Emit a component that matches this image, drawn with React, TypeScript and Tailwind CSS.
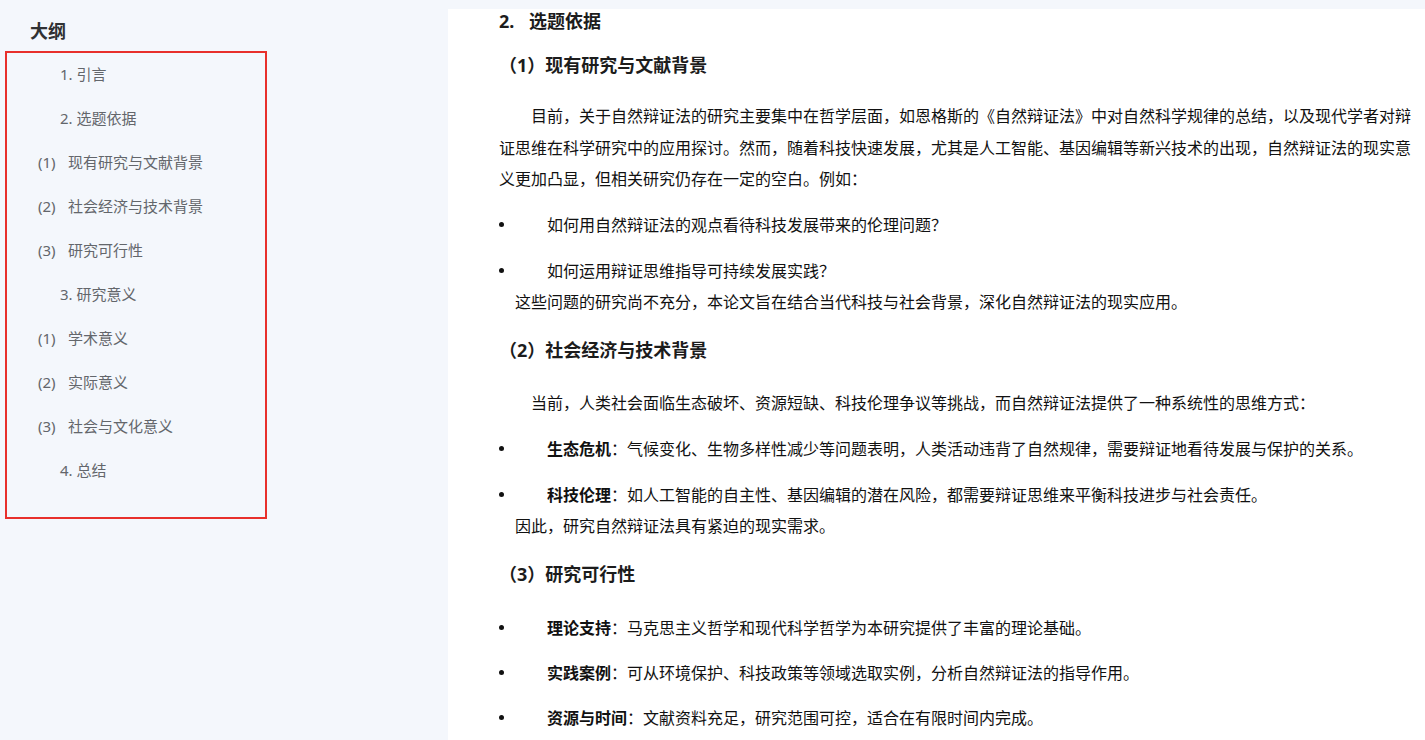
const OUTLINE: { num?: string; sub?: string; title: string }[] = [
  { num: '1.', title: '引言' },
  { num: '2.', title: '选题依据' },
  { sub: '(1)', title: '现有研究与文献背景' },
  { sub: '(2)', title: '社会经济与技术背景' },
  { sub: '(3)', title: '研究可行性' },
  { num: '3.', title: '研究意义' },
  { sub: '(1)', title: '学术意义' },
  { sub: '(2)', title: '实际意义' },
  { sub: '(3)', title: '社会与文化意义' },
  { num: '4.', title: '总结' },
];

function Bullet({
  label,
  children,
  className = '',
}: {
  label?: string;
  children: React.ReactNode;
  className?: string;
}) {
  return (
    <div className={`flex items-center leading-[32px] ${className}`}>
      <span className="flex w-[48px] shrink-0 items-center">
        <span className="h-[5px] w-[5px] rounded-full bg-[#111]" />
      </span>
      <span>
        {label ? <strong className="font-bold">{label}</strong> : null}
        {label ? '：' : null}
        {children}
      </span>
    </div>
  );
}

function SectionTitle({ children, className = '' }: { children: React.ReactNode; className?: string }) {
  return (
    <h3 className={`text-[18px] font-bold leading-[24px] text-[#1c1c1c] ${className}`}>{children}</h3>
  );
}

export default function App() {
  return (
    <div
      className="flex h-[740px] overflow-hidden bg-[#f4f7fc]"
      style={{ fontFamily: '"Noto Sans", "Noto Sans CJK SC", sans-serif' }}
    >
      <aside className="w-[448px] shrink-0">
        <h2 className="pl-[30px] pt-[19px] text-[18px] font-bold leading-[24px] text-[#303133]">大纲</h2>
        <nav className="ml-[5px] mt-[8px] h-[468px] w-[262px] border-2 border-[#e8302c]">
          <div className="-mt-px">
            {OUTLINE.map((item, i) => (
              <div
                key={i}
                className={`flex h-[44px] items-center text-[15px] text-[#63666b] ${
                  item.num ? 'pl-[53px]' : 'pl-[31px]'
                }`}
              >
                {item.num ? (
                  <span>
                    {item.num} {item.title}
                  </span>
                ) : (
                  <>
                    <span className="w-[30px] shrink-0">{item.sub}</span>
                    <span>{item.title}</span>
                  </>
                )}
              </div>
            ))}
          </div>
        </nav>
      </aside>

      <main className="mt-[9px] flex-1 bg-white pl-[51px] pr-[8px] text-[16px] text-[#111]">
        <h2 className="flex text-[18px] font-bold leading-[24px] text-[#1c1c1c]">
          <span className="w-[30px]">2.</span>
          <span>选题依据</span>
        </h2>

        <SectionTitle className="mt-[20px]">（1）现有研究与文献背景</SectionTitle>
        <p className="mt-[24px] indent-[32px] leading-[31.5px]">
          目前，关于自然辩证法的研究主要集中在哲学层面，如恩格斯的《自然辩证法》中对自然科学规律的总结，以及现代学者对辩证思维在科学研究中的应用探讨。然而，随着科技快速发展，尤其是人工智能、基因编辑等新兴技术的出现，自然辩证法的现实意义更加凸显，但相关研究仍存在一定的空白。例如：
        </p>
        <Bullet className="mt-[13px]">如何用自然辩证法的观点看待科技发展带来的伦理问题？</Bullet>
        <Bullet className="mt-[14px]">如何运用辩证思维指导可持续发展实践？</Bullet>
        <p className="pl-[16px] leading-[31px]">
          这些问题的研究尚不充分，本论文旨在结合当代科技与社会背景，深化自然辩证法的现实应用。
        </p>

        <SectionTitle className="mt-[20px]">（2）社会经济与技术背景</SectionTitle>
        <p className="mt-[25px] indent-[32px] leading-[32px]">
          当前，人类社会面临生态破坏、资源短缺、科技伦理争议等挑战，而自然辩证法提供了一种系统性的思维方式：
        </p>
        <Bullet label="生态危机" className="mt-[14px]">
          气候变化、生物多样性减少等问题表明，人类活动违背了自然规律，需要辩证地看待发展与保护的关系。
        </Bullet>
        <Bullet label="科技伦理" className="mt-[14px]">
          如人工智能的自主性、基因编辑的潜在风险，都需要辩证思维来平衡科技进步与社会责任。
        </Bullet>
        <p className="pl-[16px] leading-[31px]">因此，研究自然辩证法具有紧迫的现实需求。</p>

        <SectionTitle className="mt-[20px]">（3）研究可行性</SectionTitle>
        <Bullet label="理论支持" className="mt-[26px]">
          马克思主义哲学和现代科学哲学为本研究提供了丰富的理论基础。
        </Bullet>
        <Bullet label="实践案例" className="mt-[13px]">
          可从环境保护、科技政策等领域选取实例，分析自然辩证法的指导作用。
        </Bullet>
        <Bullet label="资源与时间" className="mt-[13px]">
          文献资料充足，研究范围可控，适合在有限时间内完成。
        </Bullet>
      </main>
    </div>
  );
}
